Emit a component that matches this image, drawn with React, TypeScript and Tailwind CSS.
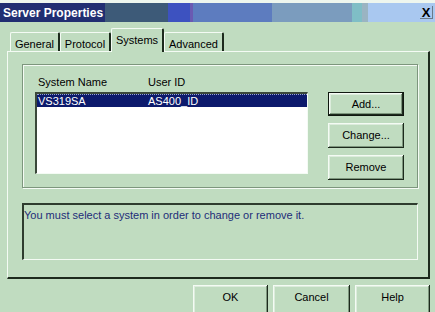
import React from 'react';

const raised =
  'shadow-[inset_-1px_-1px_0_#1c2a1c,inset_1px_1px_0_#f4fbf4,inset_-2px_-2px_0_#7d967d,inset_2px_2px_0_#dcecdc]';

const Button: React.FC<{ label: string; className?: string; innerClassName?: string; isDefault?: boolean }> = ({
  label,
  className = '',
  innerClassName = '',
  isDefault,
}) => (
  <div
    className={`flex items-center justify-center bg-[#c0dcc0] text-[11px] text-black ${
      isDefault ? 'border border-[#101810]' : ''
    } ${className}`}
  >
    <div className={`w-full h-full flex items-center justify-center ${raised} ${innerClassName}`}>{label}</div>
  </div>
);

const tabs = [
  { name: 'General', w: 'w-[50px]' },
  { name: 'Protocol', w: 'w-[51px]' },
  { name: 'Systems', w: 'w-[53px]', active: true },
  { name: 'Advanced', w: 'w-[60px]' },
];

export default function App() {
  return (
    <div
      className="w-[435px] h-[312px] overflow-hidden bg-[#c0dcc0] flex flex-col"
      style={{ fontFamily: '"Liberation Sans", Arial, sans-serif' }}
    >
      {/* window top edge */}
      <div className="h-[3px] shrink-0 bg-[#eef6ee]" />

      {/* Title bar */}
      <div className="h-[19px] shrink-0 flex relative">
        <div className="w-[105px] bg-[#212e72]" />
        <div className="w-[63px] bg-[#3d5a78]" />
        <div className="w-[22px] bg-[#3d52c0]" />
        <div className="w-[3px] bg-[#6a5ab2]" />
        <div className="w-[79px] bg-[#5d7cbf]" />
        <div className="w-[80px] bg-[#7b9cbe]" />
        <div className="w-[10px] bg-[#7fbec6]" />
        <div className="w-[6px] bg-[#9ab4c2]" />
        <div className="flex-1 bg-[#a9c8f0] flex items-center justify-end pr-[2px]">
          <div className="w-[13px] h-[13px] flex items-center justify-center border-b border-r border-[#6a7a8a] text-[13px] font-bold leading-none text-black">
            X
          </div>
        </div>
        <div className="absolute left-[3px] top-0 h-full flex items-center text-[12px] font-bold text-white">
          Server Properties
        </div>
      </div>

      {/* Tabs */}
      <div className="flex shrink-0 items-end pl-[10px] mt-[6px] h-[23px] relative z-10">
        {tabs.map((t) =>
          t.active ? (
            <div
              key={t.name}
              className={`${t.w} h-[24px] -mb-[1px] bg-[#c0dcc0] border-l border-t border-[#f4fbf4] border-r-2 border-r-[#1c2a1c] rounded-t-[2px] flex justify-center pt-[3px] text-[11px] text-black`}
            >
              {t.name}
            </div>
          ) : (
            <div
              key={t.name}
              className={`${t.w} h-[19px] border-l border-t border-[#f4fbf4] border-r-2 border-r-[#1c2a1c] rounded-t-[2px] flex justify-center pt-[3px] text-[11px] text-black`}
            >
              {t.name}
            </div>
          ),
        )}
      </div>

      {/* Tab panel */}
      <div className="ml-[7px] shrink-0 w-[423px] h-[228px] border-l border-t border-[#f4fbf4] border-r-2 border-b-2 border-r-[#1c2a1c] border-b-[#1c2a1c] pl-[14px] pt-[12px] flex flex-col">
        {/* Group frame */}
        <div className="w-[396px] h-[124px] border border-[#7d967d] shadow-[inset_1px_1px_0_#f4fbf4,1px_1px_0_#f4fbf4] flex pl-[12px] pt-[9px]">
          <div className="flex flex-col w-[273px]">
            <div className="h-[18px] flex items-start text-[11px] text-black">
              <span className="w-[113px] pl-[3px]">System Name</span>
              <span>User ID</span>
            </div>
            <div className="h-[82px] bg-white border-t-2 border-l-2 border-t-[#3a483a] border-l-[#3a483a] border-b border-r border-b-[#f4fbf4] border-r-[#f4fbf4]">
              <div className="h-[13px] bg-[#0c1a6c] border-t border-dotted border-[#9aa6d0] flex items-center text-[11px] text-white">
                <span className="w-[111px] pl-[1px]">VS319SA</span>
                <span>AS400_ID</span>
              </div>
            </div>
          </div>
          <div className="ml-[20px] flex flex-col pt-[18px] gap-[7px]">
            <Button label="Add..." isDefault className="w-[76px] h-[24px]" />
            <Button label="Change..." className="w-[76px] h-[25px]" />
            <Button label="Remove" className="w-[76px] h-[25px]" />
          </div>
        </div>

        {/* Message box */}
        <div className="mt-[15px] w-[396px] h-[57px] border-t-2 border-l-2 border-t-[#2e3c2e] border-l-[#2e3c2e] border-b border-r border-b-[#f4fbf4] border-r-[#f4fbf4] text-[11px] text-[#1e2c78] pt-[2px]">
          You must select a system in order to change or remove it.
        </div>
      </div>

      {/* Bottom buttons */}
      <div className="flex shrink-0 pl-[193px] mt-[6px] gap-[5px]">
        <Button label="OK" className="w-[75px] h-[30px]" innerClassName="pb-[5px]" />
        <Button label="Cancel" className="w-[77px] h-[30px]" innerClassName="pb-[5px]" />
        <Button label="Help" className="w-[75px] h-[30px]" innerClassName="pb-[5px]" />
      </div>
    </div>
  );
}
